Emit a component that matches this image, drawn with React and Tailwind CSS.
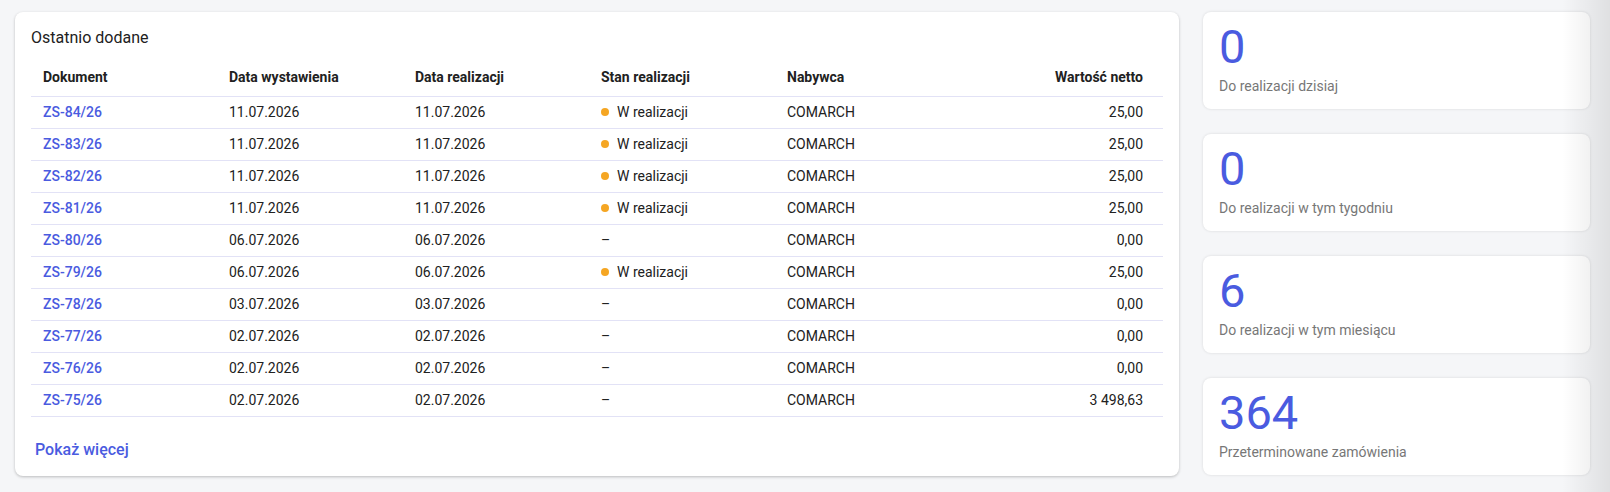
const rows = [
  { doc: 'ZS-84/26', issued: '11.07.2026', due: '11.07.2026', status: true, buyer: 'COMARCH', value: '25,00' },
  { doc: 'ZS-83/26', issued: '11.07.2026', due: '11.07.2026', status: true, buyer: 'COMARCH', value: '25,00' },
  { doc: 'ZS-82/26', issued: '11.07.2026', due: '11.07.2026', status: true, buyer: 'COMARCH', value: '25,00' },
  { doc: 'ZS-81/26', issued: '11.07.2026', due: '11.07.2026', status: true, buyer: 'COMARCH', value: '25,00' },
  { doc: 'ZS-80/26', issued: '06.07.2026', due: '06.07.2026', status: false, buyer: 'COMARCH', value: '0,00' },
  { doc: 'ZS-79/26', issued: '06.07.2026', due: '06.07.2026', status: true, buyer: 'COMARCH', value: '25,00' },
  { doc: 'ZS-78/26', issued: '03.07.2026', due: '03.07.2026', status: false, buyer: 'COMARCH', value: '0,00' },
  { doc: 'ZS-77/26', issued: '02.07.2026', due: '02.07.2026', status: false, buyer: 'COMARCH', value: '0,00' },
  { doc: 'ZS-76/26', issued: '02.07.2026', due: '02.07.2026', status: false, buyer: 'COMARCH', value: '0,00' },
  { doc: 'ZS-75/26', issued: '02.07.2026', due: '02.07.2026', status: false, buyer: 'COMARCH', value: '3 498,63' }
]

const stats = [
  { value: '0', label: 'Do realizacji dzisiaj' },
  { value: '0', label: 'Do realizacji w tym tygodniu' },
  { value: '6', label: 'Do realizacji w tym miesiącu' },
  { value: '364', label: 'Przeterminowane zamówienia' }
]

export default function App() {
  return (
    <div className="relative h-[492px] w-[1610px] overflow-hidden bg-[#f5f6f8] font-['Roboto',sans-serif] text-[#212121]">
      <div className="flex gap-6 pl-[15px] pt-3">
        {/* Recent documents */}
        <div className="flex h-[464px] w-[1164px] flex-col rounded-lg bg-white px-4 pt-4 shadow-[0_1px_3px_rgba(0,0,0,0.24)]">
          <h2 className="text-[16px] leading-[20px] text-[#212121]">Ostatnio dodane</h2>
          <table className="mt-[12px] w-full border-collapse text-[14px]">
            <thead>
              <tr className="h-[36px] border-b border-[#e2e2f6] text-left text-[14px] font-bold">
                <th className="w-[186px] px-3 font-bold">Dokument</th>
                <th className="w-[186px] px-3 font-bold">Data wystawienia</th>
                <th className="w-[186px] px-3 font-bold">Data realizacji</th>
                <th className="w-[186px] px-3 font-bold">Stan realizacji</th>
                <th className="w-[186px] px-3 font-bold">Nabywca</th>
                <th className="px-5 text-right font-bold">Wartość netto</th>
              </tr>
            </thead>
            <tbody>
              {rows.map((r) => (
                <tr key={r.doc} className="h-[32px] border-b border-[#e2e2f6]">
                  <td className="px-3 font-medium text-[#4a5be0]">{r.doc}</td>
                  <td className="px-3">{r.issued}</td>
                  <td className="px-3">{r.due}</td>
                  <td className="px-3">
                    {r.status ? (
                      <span className="flex items-center gap-2">
                        <span className="h-2 w-2 rounded-full bg-[#f5a623]" />
                        W realizacji
                      </span>
                    ) : (
                      '–'
                    )}
                  </td>
                  <td className="px-3">{r.buyer}</td>
                  <td className="px-5 text-right">{r.value}</td>
                </tr>
              ))}
            </tbody>
          </table>
          <a className="mt-[21px] pl-1 text-[16px] font-medium text-[#4a5be0]">Pokaż więcej</a>
        </div>

        {/* Stat cards */}
        <div className="flex w-[387px] flex-col gap-[25px]">
          {stats.map((s, i) => (
            <div key={i} className="flex h-[97px] flex-col rounded-lg bg-white px-4 pt-[10px] shadow-[0_0_3px_rgba(0,0,0,0.12)]">
              <div className="text-[47px] leading-[50px] text-[#4a5be0]">{s.value}</div>
              <div className="mt-[4px] text-[14px] text-[#777]">{s.label}</div>
            </div>
          ))}
        </div>
      </div>

      {/* scroll shade on the right edge */}
      <div className="pointer-events-none absolute right-0 top-0 h-full w-[48px] bg-gradient-to-r from-transparent to-[rgba(0,0,0,0.09)]" />
    </div>
  )
}
